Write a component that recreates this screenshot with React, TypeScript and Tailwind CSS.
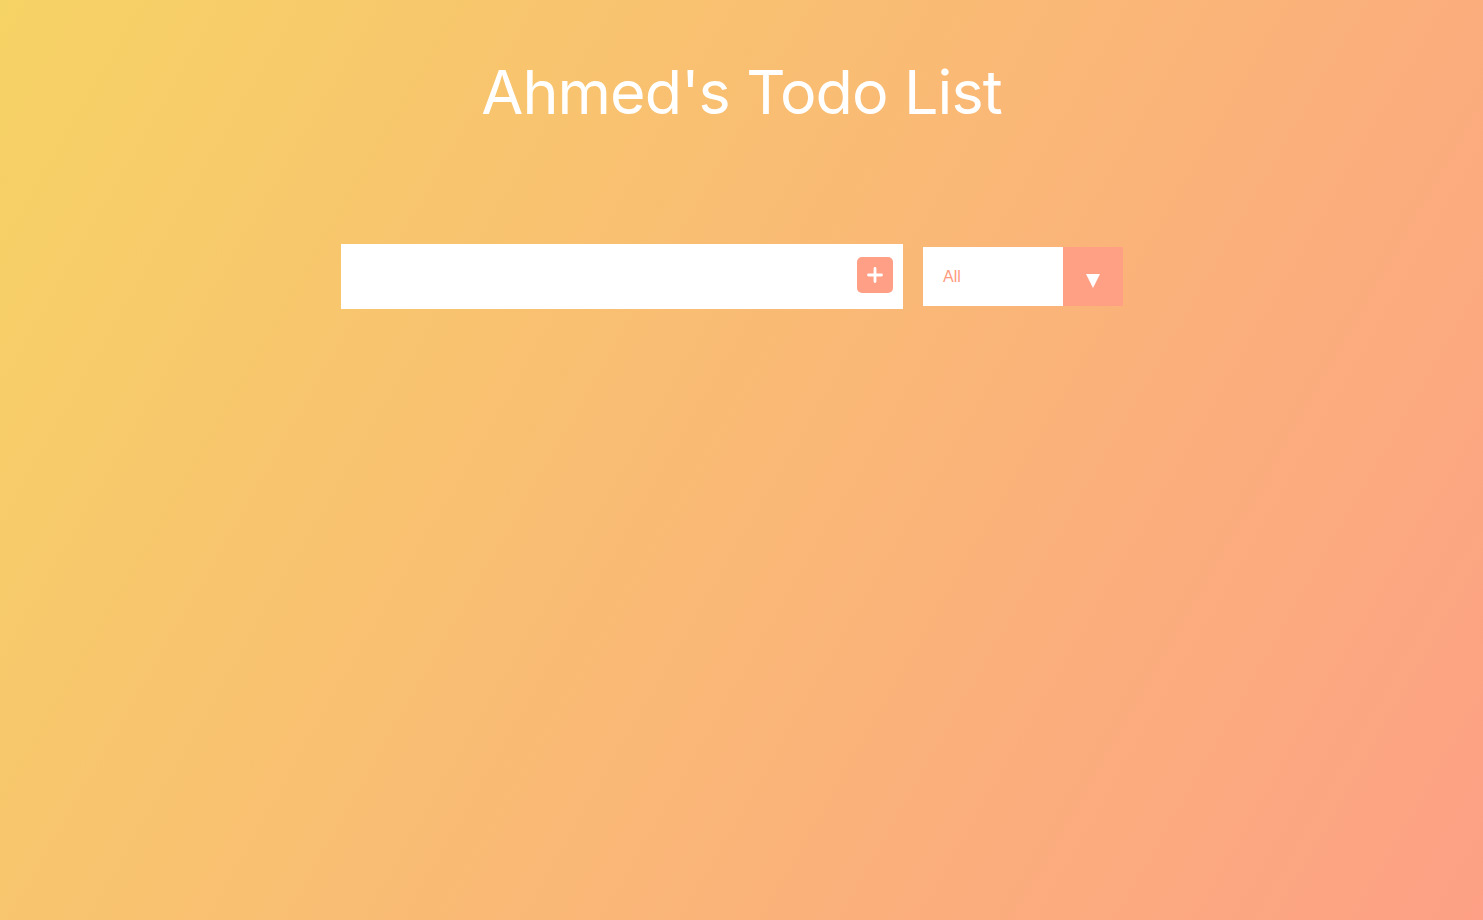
import React from "react";

export default function App() {
  return (
    <div
      className="min-h-[920px] w-full bg-[linear-gradient(120deg,#f6d365_0%,#fda085_100%)] text-white"
      style={{ fontFamily: '"Liberation Sans", Arial, sans-serif' }}
    >
      <header className="flex justify-center pt-[52px] h-[244px]">
        <h1
          className="text-[61px] font-normal leading-[80px] tracking-[-0.9px] text-white"
          style={{ fontFamily: 'Inter, "Noto Sans", sans-serif' }}
        >
          Ahmed's Todo List
        </h1>
      </header>
      <form className="flex items-center justify-center" onSubmit={(e) => e.preventDefault()}>
        <div className="flex h-[65px] w-[562px] items-start bg-white pr-[10px]">
          <input
            type="text"
            className="h-full flex-1 bg-transparent px-4 text-[18px] text-gray-700 outline-none"
          />
          <button
            type="submit"
            className="mt-[13px] flex h-[36px] w-[36px] items-center justify-center rounded-[5px] bg-[#ff9f86]"
          >
            <svg width="18" height="18" viewBox="0 0 18 18" fill="none">
              <path d="M9 2.5v13M2.5 9h13" stroke="white" strokeWidth="2.8" strokeLinecap="round" />
            </svg>
          </button>
        </div>
        <div className="ml-[20px] mr-[19px] flex h-[59px] w-[200px] items-center bg-white">
          <span className="flex-1 pl-[20px] text-[16px] text-[#ff9b80]">All</span>
          <div className="flex h-full w-[60px] items-center justify-center bg-[#ffa085]">
            <svg width="16" height="14" viewBox="0 0 16 14" className="mt-[9px]">
              <path d="M1 0h14L8 14z" fill="white" />
            </svg>
          </div>
        </div>
      </form>
    </div>
  );
}
